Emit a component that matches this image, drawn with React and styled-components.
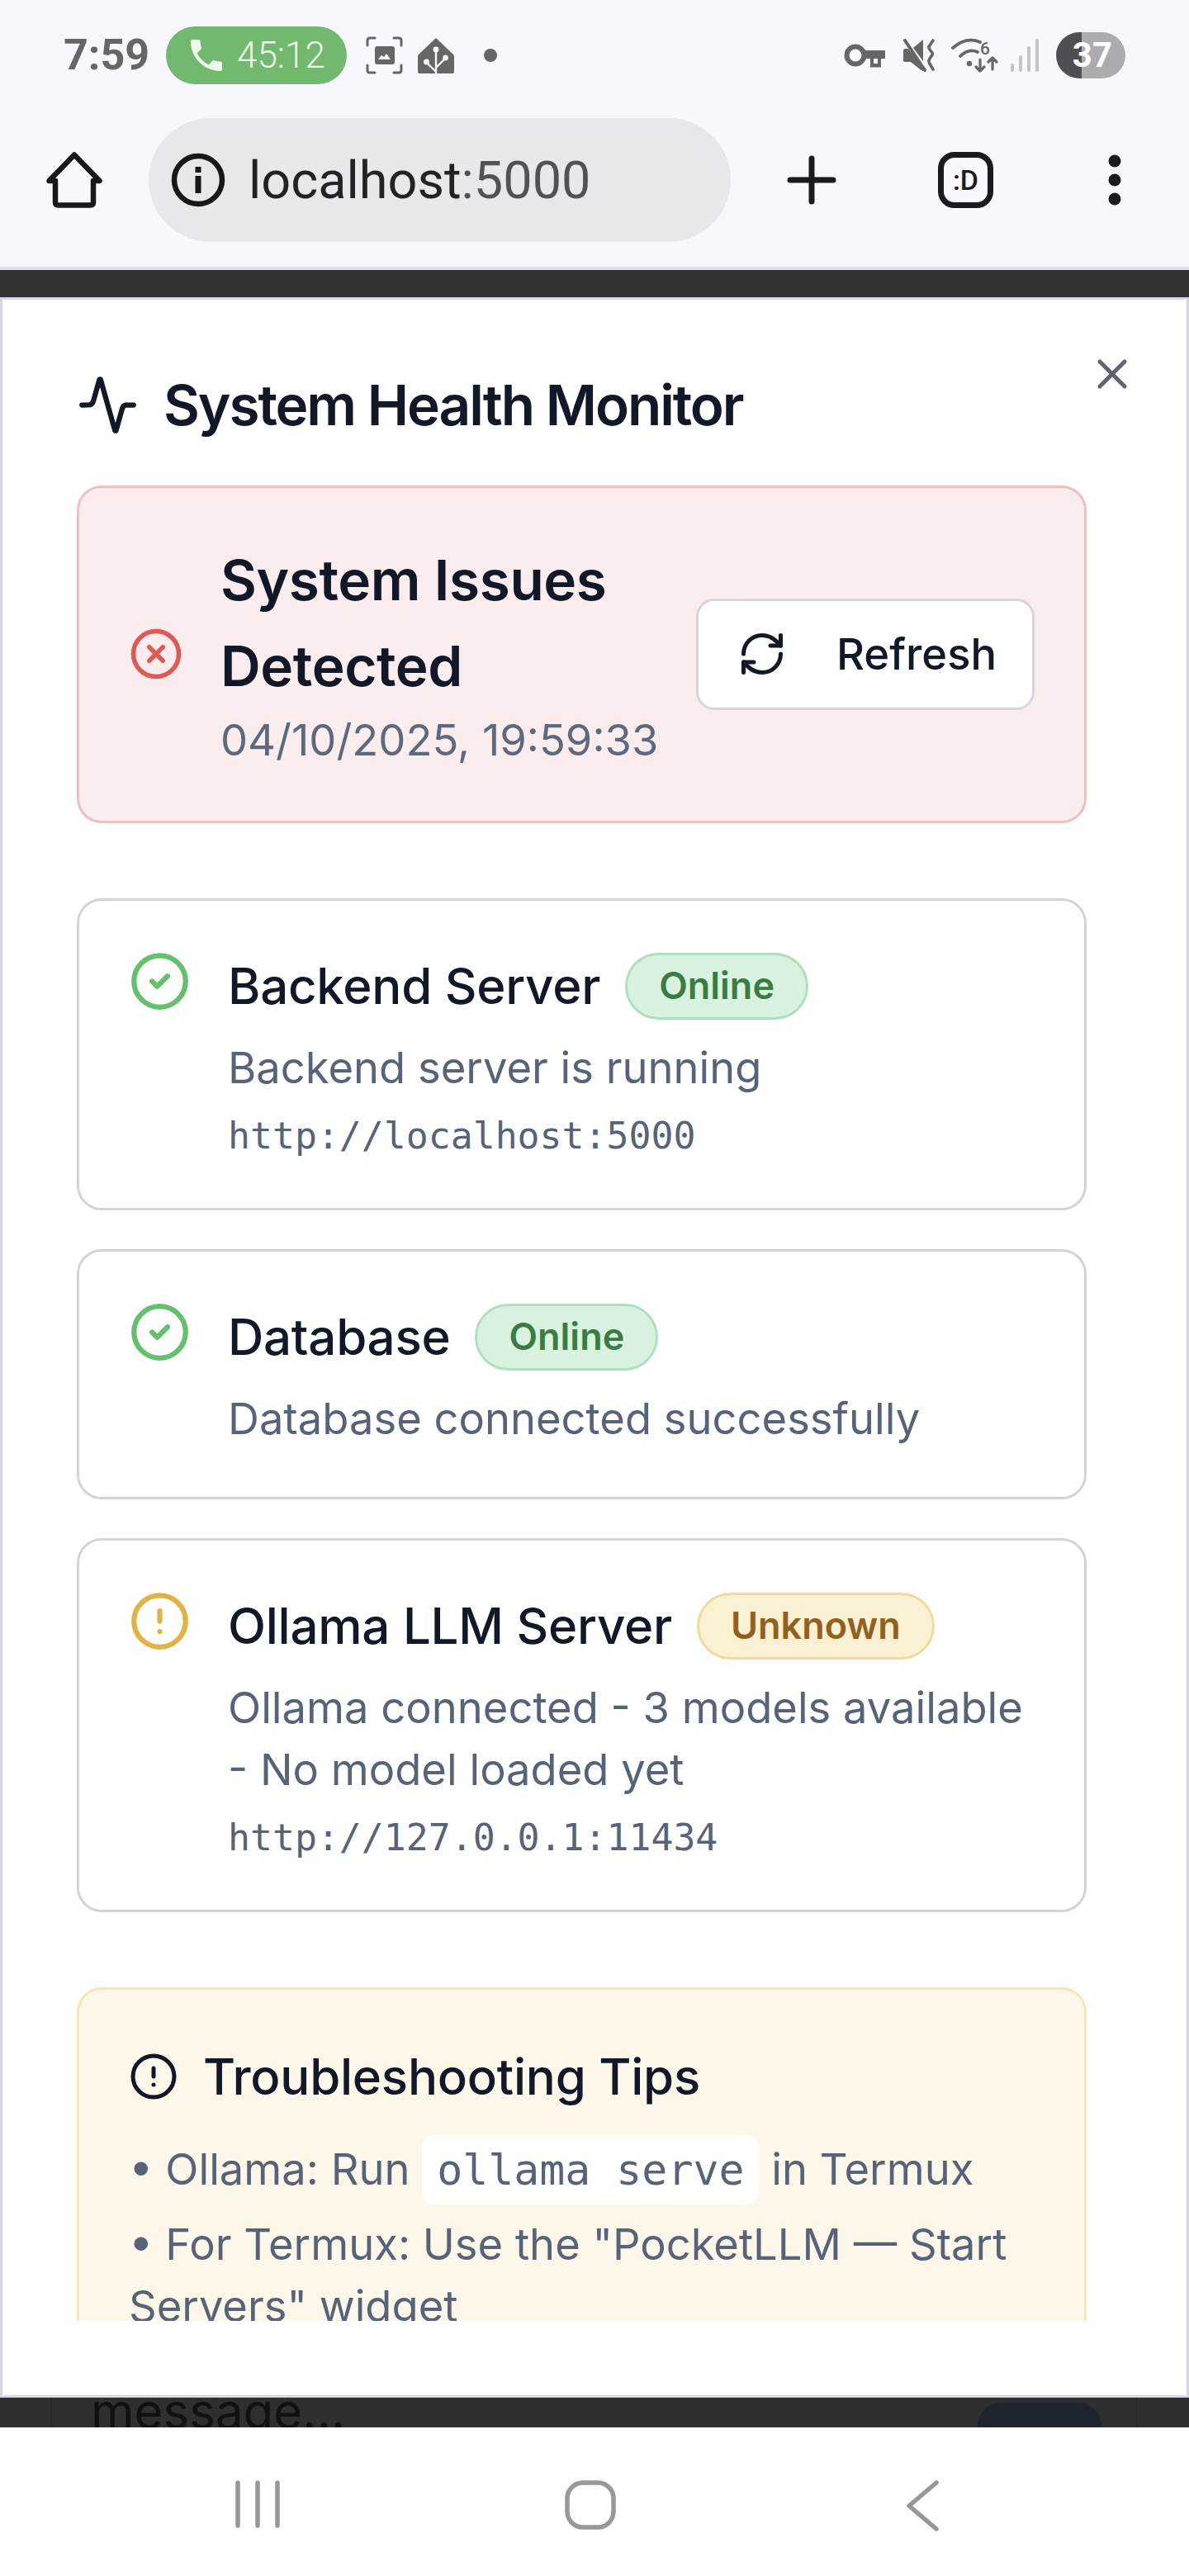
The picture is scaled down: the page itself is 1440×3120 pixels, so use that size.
import React from 'react'
import styled, { createGlobalStyle } from 'styled-components'
import { Activity, X, CircleX, CircleCheck, CircleAlert, RefreshCw } from 'lucide-react'

const Global = createGlobalStyle`
  html, body { margin: 0; padding: 0; background: #fff; }
  * { box-sizing: border-box; }
  body { font-family: Inter, "Noto Sans", sans-serif; }
`

const Page = styled.div`
  width: 1440px;
  height: 3120px;
  display: flex;
  flex-direction: column;
  overflow: hidden;
  background: #fff;
`

/* status bar */
const StatusBar = styled.div`
  height: 134px;
  background: #f9f7fe;
  display: flex;
  align-items: center;
  justify-content: space-between;
  padding: 0 77px 0 77px;
`
const StatusGroup = styled.div`
  display: flex;
  align-items: center;
`
const Time = styled.span`
  font-family: Roboto, sans-serif;
  font-weight: 700;
  font-size: 52px;
  line-height: 60px;
  color: #666;
  width: 108px;
  margin-right: 16px;
`
const CallPill = styled.div`
  width: 219px;
  height: 70px;
  border-radius: 35px;
  background: #72b96f;
  display: flex;
  align-items: center;
  padding-left: 29px;
  gap: 17px;
  color: #eef8ed;
  font-family: Roboto, sans-serif;
  font-weight: 300;
  font-size: 44px;
`
const StatusIcon = styled.svg`
  display: block;
  flex-shrink: 0;
  margin-left: ${p => p.$ml || 0}px;
`
const Battery = styled.div`
  width: 84px;
  height: 56px;
  margin-left: 20px;
  border-radius: 28px;
  background: linear-gradient(90deg, #4f4f51 37%, #adabb0 37%);
  color: #fff;
  font-family: Roboto, sans-serif;
  font-weight: 700;
  font-size: 42px;
  line-height: 56px;
  text-align: right;
  padding-right: 16px;
`

/* browser toolbar */
const Toolbar = styled.div`
  height: 189px;
  background: #f9f7fe;
  display: flex;
  align-items: flex-start;
  padding-left: 56px;
`
const HomeSlot = styled.div`
  padding-top: 50px;
  width: 124px;
`
const UrlBar = styled.div`
  width: 705px;
  height: 150px;
  margin-top: 9px;
  border-radius: 75px;
  background: #e7e7ec;
  display: flex;
  align-items: center;
  padding-left: 27px;
  gap: 28px;
  font-family: Roboto, sans-serif;
  font-size: 63px;
  font-weight: 400;
  color: #222327;
`
const UrlPort = styled.span`
  color: #505257;
`
const ToolSlot = styled.div`
  margin-top: ${p => p.$mt}px;
  margin-left: ${p => p.$ml}px;
`
const TabBox = styled.div`
  width: 67px;
  height: 68px;
  border: 7px solid #1b1b1f;
  border-radius: 20px;
  display: flex;
  align-items: center;
  justify-content: center;
  font-family: Roboto, sans-serif;
  font-weight: 500;
  font-size: 34px;
  color: #1b1b1f;
`

/* the page behind the dialog */
const Divider = styled.div`
  height: 4px;
  background: #e3e1e8;
`
const DarkStrip = styled.div`
  height: 32.5px;
  background: #333;
`
const BottomStrip = styled.div`
  height: 36px;
  background: #2f2f2f;
  padding: 0 62px 0 61px;
  overflow: hidden;
`
const InputFrame = styled.div`
  height: 36px;
  border-left: 2px solid #292929;
  border-right: 2px solid #292929;
  display: flex;
  justify-content: space-between;
  padding: 0 42px 0 47px;
  overflow: hidden;
`
const BehindText = styled.div`
  font-size: 60px;
  line-height: 60px;
  margin-top: -14px;
  color: #111;
`
const BehindButton = styled.div`
  width: 150px;
  height: 60px;
  margin-top: 6px;
  border-radius: 28px;
  background: #1e252f;
`

/* dialog */
const Modal = styled.div`
  position: relative;
  height: 2544.5px;
  background: #fff;
  border: 3.75px solid #d5d8e2;
  padding: 90px 0 0 90px;
`
const CloseButton = styled.div`
  position: absolute;
  top: 60px;
  right: 60px;
  width: 60px;
  height: 60px;
  color: #5f6470;
`
const Header = styled.div`
  display: flex;
  align-items: center;
  gap: 30px;
  height: 75px;
  margin-bottom: 60px;
  color: #111827;
`
const DialogTitle = styled.h2`
  margin: 0;
  font-size: 67.5px;
  line-height: 75px;
  font-weight: 600;
  letter-spacing: -2.1px;
  color: #111827;
`
const ScrollArea = styled.div`
  width: 1223px;
  height: 2223px;
  overflow: hidden;
`
const AlertCard = styled.div`
  display: flex;
  align-items: center;
  gap: 45px;
  padding: 60px;
  margin-bottom: 91px;
  border: 3.75px solid #eec0be;
  border-radius: 30px;
  background: #fbeded;
`
const AlertBody = styled.div`
  flex: 1;
  min-width: 0;
`
const AlertTitle = styled.div`
  font-size: 67.5px;
  line-height: 104px;
  font-weight: 600;
  letter-spacing: -0.4px;
  color: #111827;
`
const AlertDate = styled.div`
  font-size: 52.5px;
  line-height: 75px;
  color: #5b6a7f;
  white-space: nowrap;
`
const RefreshButton = styled.div`
  flex-shrink: 0;
  width: 410px;
  height: 135px;
  display: flex;
  align-items: center;
  gap: 60px;
  padding-left: 47px;
  background: #fff;
  border: 3.75px solid #d5d7de;
  border-radius: 22px;
  font-size: 52.5px;
  font-weight: 500;
  color: #111827;
`
const StatusList = styled.div`
  display: flex;
  flex-direction: column;
  gap: 47px;
  margin-bottom: 91px;
`
const StatusCard = styled.div`
  display: flex;
  gap: 45px;
  padding: 60px 60px 57px;
  border: 3.75px solid #d1d5db;
  border-radius: 30px;
`
const StatusBody = styled.div`
  flex: 1;
  min-width: 0;
`
const NameRow = styled.div`
  display: flex;
  align-items: center;
  gap: 30px;
  height: 88px;
  margin-bottom: 17px;
`
const Name = styled.span`
  font-size: 60px;
  line-height: 87px;
  font-weight: 500;
  letter-spacing: -0.25px;
  color: #111827;
`
const tones = {
  online: { bg: '#d9f2e0', line: '#aee0bd', text: '#3a7d44' },
  unknown: { bg: '#faf0d2', line: '#f0dc9f', text: '#92601f' },
}
const Badge = styled.span`
  flex-shrink: 0;
  height: 81px;
  padding: 0 38px;
  border-radius: 41px;
  border: 3.75px solid ${p => tones[p.$tone].line};
  background: ${p => tones[p.$tone].bg};
  color: ${p => tones[p.$tone].text};
  font-size: 45px;
  line-height: 73px;
  font-weight: 600;
`
const Desc = styled.div`
  font-size: 52.5px;
  line-height: 75px;
  color: #566378;
`
const Url = styled.div`
  margin-top: 15px;
  font-family: "DejaVu Sans Mono", "Liberation Mono", monospace;
  font-size: 44.8px;
  line-height: 60px;
  color: #566378;
`
const TipsCard = styled.div`
  padding: 60px;
  min-height: 600px;
  border: 3.75px solid #f5e6b3;
  border-radius: 30px;
  background: #fdf7e9;
`
const TipsHead = styled.div`
  display: flex;
  align-items: center;
  gap: 30px;
  height: 90px;
  margin-bottom: 30px;
  font-size: 60px;
  font-weight: 500;
  letter-spacing: -0.25px;
  color: #111827;
`
const TipLine = styled.div`
  font-size: 52.5px;
  line-height: 75px;
  color: #566378;
  margin-bottom: 15px;
`
const Code = styled.code`
  font-family: "DejaVu Sans Mono", "Liberation Mono", monospace;
  font-size: 51.5px;
  background: #fff;
  padding: 12px 18px;
  border-radius: 15px;
`

/* android nav */
const NavBar = styled.div`
  height: 180px;
  background: #fff;
  display: flex;
  align-items: flex-start;
  padding: 64px 0 0 285px;
`

const PhoneIcon = () => (
  <svg width="40" height="38" viewBox="3 3 18 18" fill="#eef8ed">
    <path d="M6.6 10.8c1.4 2.8 3.8 5.1 6.6 6.6l2.2-2.2c.3-.3.7-.4 1-.2 1.1.4 2.3.6 3.6.6.6 0 1 .4 1 1V20c0 .6-.4 1-1 1C10.6 21 3 13.4 3 4c0-.6.4-1 1-1h3.5c.6 0 1 .4 1 1 0 1.3.2 2.5.6 3.6.1.3 0 .7-.2 1l-2.3 2.2z" />
  </svg>
)

const ScreenshotIcon = () => (
  <StatusIcon $ml={23} width="45" height="46" viewBox="0 0 45 46" fill="none">
    <path d="M2 11V5q0-3 3-3h6M34 2h6q3 0 3 3v6M2 35v6q0 3 3 3h6M34 44h6q3 0 3-3v-6" stroke="#666" strokeWidth="3" strokeLinecap="round" />
    <rect x="11" y="12" width="24" height="22" rx="3" fill="#666" />
    <path d="M15 28l4-5 3 2 3-4 5 7z" fill="#f9f7fe" />
  </StatusIcon>
)

const AssistantIcon = () => (
  <StatusIcon $ml={18} width="44" height="43" viewBox="0 0 44 43">
    <path d="M22 0L43 20Q44 21 44 22V41Q44 43 42 43H2Q0 43 0 41V22Q0 21 1 20Z" fill="#666" />
    <path d="M22 14V43M11 30L22 41M33 25L22 36" stroke="#f9f7fe" strokeWidth="2.4" fill="none" />
    <circle cx="22" cy="14" r="3.4" fill="#f9f7fe" />
    <circle cx="10.5" cy="29" r="3.4" fill="#f9f7fe" />
    <circle cx="33.5" cy="24" r="3.4" fill="#f9f7fe" />
  </StatusIcon>
)

const KeyIcon = () => (
  <StatusIcon width="50" height="29" viewBox="0 0 50 29">
    <circle cx="14" cy="14" r="10.5" fill="none" stroke="#666" strokeWidth="6" />
    <path d="M22 8H50V18H45V28.500H32V18H22Z" fill="#666" />
    <rect x="36" y="18" width="5" height="6" fill="#f9f7fe" />
  </StatusIcon>
)

const MuteIcon = () => (
  <StatusIcon $ml={21} width="40" height="40" viewBox="0 0 40 40" fill="none">
    <path d="M1 14Q1 12 4 12H7L25 35V39Q23 39 20 36L10 28H4Q1 28 1 26Z" fill="#666" />
    <path d="M13 11L25 1V27Z" fill="#666" />
    <path d="M3 2L27 38" stroke="#666" strokeWidth="4" strokeLinecap="round" />
    <path d="M37 2L33 8Q31 10 33 13L36 17Q37 19 35 21L33 24Q31 27 33 30L37 37" stroke="#666" strokeWidth="3.600" strokeLinecap="round" />
  </StatusIcon>
)

const WifiIcon = () => (
  <StatusIcon $ml={19} width="58" height="42" viewBox="0 0 58 42" fill="none">
    <path d="M2 12Q18-2 35 5M11 22Q21 12 32 17" stroke="#666" strokeWidth="3.800" strokeLinecap="round" />
    <circle cx="22" cy="31" r="3.200" fill="#666" />
    <text x="35" y="20" fontFamily="Roboto, sans-serif" fontSize="21" fontWeight="500" fill="#666">6</text>
    <path d="M35 26V40M30 35L35 40L40 35M50 38V24M45 29L50 24L55 29" stroke="#666" strokeWidth="3.200" strokeLinecap="round" strokeLinejoin="round" />
  </StatusIcon>
)

const SignalIcon = () => (
  <StatusIcon $ml={13} width="36" height="40" viewBox="0 0 36 40" fill="none" stroke="#c5c4c9" strokeWidth="4" strokeLinecap="round">
    <path d="M3 32V38M13 22V38M23 11V38M33 2V38" />
  </StatusIcon>
)

const HomeIcon = () => (
  <svg width="68" height="68" viewBox="0 0 68 68" fill="none" stroke="#17181c" strokeWidth="6.500" strokeLinecap="round" strokeLinejoin="round" style={{ display: 'block' }}>
    <path d="M11 35H3.500L34 3.500L64.500 35H57V61Q57 64.500 53.500 64.500H14.500Q11 64.500 11 61Z" />
  </svg>
)

const InfoIcon = () => (
  <svg width="66" height="66" viewBox="0 0 66 66" fill="none" style={{ flexShrink: 0 }}>
    <circle cx="33" cy="33" r="29" stroke="#17181c" strokeWidth="6.500" />
    <rect x="29.500" y="17" width="7" height="7" fill="#17181c" />
    <rect x="29.500" y="28" width="7" height="21" fill="#17181c" />
  </svg>
)

const PlusIcon = () => (
  <svg width="60" height="60" viewBox="0 0 60 60" stroke="#1b1b1f" strokeWidth="7" strokeLinecap="round" style={{ display: 'block' }}>
    <path d="M30 4V56M4 30H56" />
  </svg>
)

const DotsIcon = () => (
  <svg width="16" height="62" viewBox="0 0 16 62" fill="#1b1b1f" style={{ display: 'block' }}>
    <circle cx="8" cy="8" r="7.500" />
    <circle cx="8" cy="31" r="7.500" />
    <circle cx="8" cy="54" r="7.500" />
  </svg>
)

const RecentsIcon = () => (
  <svg width="54" height="58" viewBox="0 0 54 58" stroke="#989898" strokeWidth="5.500" strokeLinecap="round" style={{ display: 'block' }}>
    <path d="M3 3V55M27 3V55M51 3V55" />
  </svg>
)

const HomeNavIcon = () => (
  <svg width="62" height="60" viewBox="0 0 62 60" fill="none" stroke="#989898" strokeWidth="5.500" style={{ display: 'block', marginLeft: 345 }}>
    <rect x="3" y="3" width="56" height="54" rx="19" />
  </svg>
)

const BackIcon = () => (
  <svg width="40" height="62" viewBox="0 0 40 62" fill="none" stroke="#989898" strokeWidth="5.500" strokeLinecap="round" strokeLinejoin="round" style={{ display: 'block', marginLeft: 352 }}>
    <path d="M36 3L3 31L36 59" />
  </svg>
)

const services = [
  {
    name: 'Backend Server', tone: 'online', label: 'Online',
    desc: 'Backend server is running', url: 'http://localhost:5000',
  },
  {
    name: 'Database', tone: 'online', label: 'Online',
    desc: 'Database connected successfully',
  },
  {
    name: 'Ollama LLM Server', tone: 'unknown', label: 'Unknown',
    desc: 'Ollama connected - 3 models available - No model loaded yet', url: 'http://127.0.0.1:11434',
  },
]

const App = () => {
  return (
    <Page>
      <Global />
      <StatusBar>
        <StatusGroup>
          <Time>7:59</Time>
          <CallPill>
            <PhoneIcon />
            <span>45:12</span>
          </CallPill>
          <ScreenshotIcon />
          <AssistantIcon />
          <StatusIcon $ml={36} width="16" height="16" viewBox="0 0 16 16">
            <circle cx="8" cy="8" r="8" fill="#666" />
          </StatusIcon>
        </StatusGroup>
        <StatusGroup>
          <KeyIcon />
          <MuteIcon />
          <WifiIcon />
          <SignalIcon />
          <Battery>37</Battery>
        </StatusGroup>
      </StatusBar>

      <Toolbar>
        <HomeSlot><HomeIcon /></HomeSlot>
        <UrlBar>
          <InfoIcon />
          <span>localhost<UrlPort>:5000</UrlPort></span>
        </UrlBar>
        <ToolSlot $mt={54} $ml={68}><PlusIcon /></ToolSlot>
        <ToolSlot $mt={50} $ml={123}><TabBox>:D</TabBox></ToolSlot>
        <ToolSlot $mt={53} $ml={139}><DotsIcon /></ToolSlot>
      </Toolbar>
      <Divider />
      <DarkStrip />

      <Modal>
        <CloseButton><X size={60} strokeWidth={2} /></CloseButton>
        <Header>
          <Activity size={75} strokeWidth={2} />
          <DialogTitle>System Health Monitor</DialogTitle>
        </Header>
        <ScrollArea>
          <AlertCard>
            <CircleX size={66} color="#e05a52" strokeWidth={2} style={{ flexShrink: 0 }} />
            <AlertBody>
              <AlertTitle>System Issues Detected</AlertTitle>
              <AlertDate>04/10/2025, 19:59:33</AlertDate>
            </AlertBody>
            <RefreshButton>
              <RefreshCw size={60} strokeWidth={2} />
              <span>Refresh</span>
            </RefreshButton>
          </AlertCard>

          <StatusList>
            {services.map(s => (
              <StatusCard key={s.name}>
                {s.tone === 'online'
                  ? <CircleCheck size={75} color="#63c06c" strokeWidth={2} style={{ flexShrink: 0 }} />
                  : <CircleAlert size={75} color="#e3b341" strokeWidth={2} style={{ flexShrink: 0 }} />}
                <StatusBody>
                  <NameRow>
                    <Name>{s.name}</Name>
                    <Badge $tone={s.tone}>{s.label}</Badge>
                  </NameRow>
                  <Desc>{s.desc}</Desc>
                  {s.url && <Url>{s.url}</Url>}
                </StatusBody>
              </StatusCard>
            ))}
          </StatusList>

          <TipsCard>
            <TipsHead>
              <CircleAlert size={60} strokeWidth={2} />
              <span>Troubleshooting Tips</span>
            </TipsHead>
            <TipLine>• Ollama: Run <Code>ollama serve</Code> in Termux</TipLine>
            <TipLine>• For Termux: Use the "PocketLLM — Start Servers" widget</TipLine>
          </TipsCard>
        </ScrollArea>
      </Modal>

      <BottomStrip>
        <InputFrame>
          <BehindText>message...</BehindText>
          <BehindButton />
        </InputFrame>
      </BottomStrip>

      <NavBar>
        <RecentsIcon />
        <HomeNavIcon />
        <BackIcon />
      </NavBar>
    </Page>
  )
}

export default App
